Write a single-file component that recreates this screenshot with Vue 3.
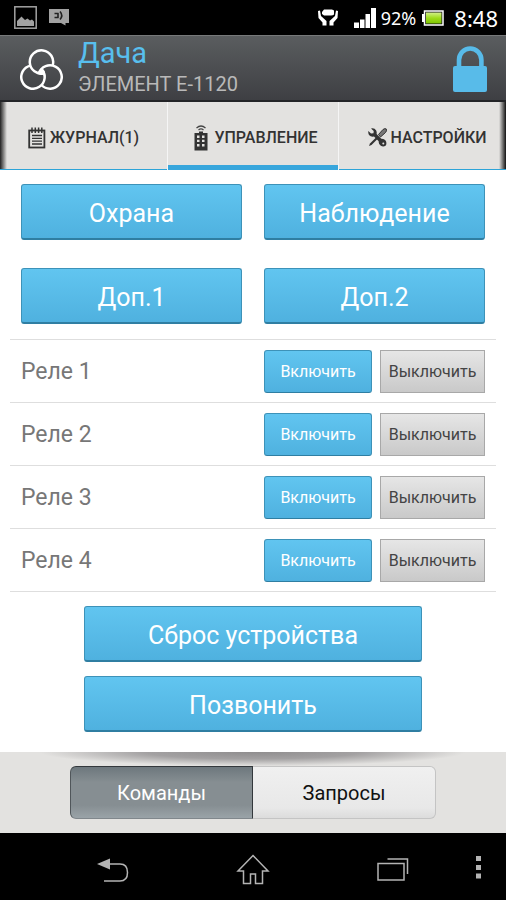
<script setup>
import { ref } from 'vue'

const tabs = [
  { id: 'log', label: 'ЖУРНАЛ(1)' },
  { id: 'control', label: 'УПРАВЛЕНИЕ' },
  { id: 'settings', label: 'НАСТРОЙКИ' },
]
const modes = ['Охрана', 'Наблюдение', 'Доп.1', 'Доп.2']
const relays = ['Реле 1', 'Реле 2', 'Реле 3', 'Реле 4']
const actions = ['Сброс устройства', 'Позвонить']
const activeTab = ref('control')
const section = ref('commands')
</script>

<template>
  <div class="screen">
    <div class="status">
      <svg class="s-pic" viewBox="0 0 23 23" width="23" height="23">
        <rect x="0.8" y="0.8" width="21.4" height="21.4" fill="none" stroke="#a2a2a2" stroke-width="1.5" />
        <path d="M3 20V15L7.500 10.500L11 14L13.500 12.500L16 14.500L18 13.500L20 15.500V20Z" fill="#a2a2a2" />
      </svg>
      <svg class="s-chat" viewBox="0 0 20 17" width="20" height="17">
        <path d="M0 0H20V14H16.500V16.500L12 14H0Z" fill="#a2a2a2" />
        <path d="M5.500 4.500H9.500M5.500 8.500H9.500M9 4V9M11 2.500Q14.500 6.500 11 10.500" fill="none" stroke="#222" stroke-width="1.600" />
      </svg>
      <span class="spacer"></span>
      <svg class="s-hands" viewBox="0 0 20 17" width="20" height="17">
        <path d="M4 3L6 0.500H14L16 1.500V5.500Q15 6.500 13 6.500H6L4 5Z" fill="#fff" />
        <path d="M0 2L2 1.500L3 7L8.500 12V16.500H4.500V13.500L0.500 9Z M20 2L18 1.500L17 7L11.500 12V16.500H15.500V13.500L19.500 9Z" fill="#fff" />
      </svg>
      <svg class="s-signal" viewBox="0 0 22 20" width="22" height="20">
        <path d="M0 14.500H5V20H0ZM6 11.500H10.500V20H6ZM11.500 6H16V20H11.500ZM17 0H22V20H17Z" fill="#fff" />
      </svg>
      <span class="percent">92%</span>
      <svg class="s-battery" viewBox="0 0 22 16" width="22" height="16">
        <defs>
          <linearGradient id="charge" x1="0" y1="0" x2="0" y2="1">
            <stop offset="0" stop-color="#d3f08a" />
            <stop offset="0.500" stop-color="#9fdc1c" />
            <stop offset="1" stop-color="#7cc400" />
          </linearGradient>
        </defs>
        <rect x="0" y="4" width="2" height="8" fill="#fff" />
        <rect x="2.500" y="1" width="18.500" height="14" fill="#111" stroke="#fff" stroke-width="1.500" />
        <rect x="4" y="2.500" width="15.500" height="11" fill="url(#charge)" />
      </svg>
      <span class="clock">8:48</span>
    </div>

    <header class="header">
      <svg class="logo" viewBox="0 0 43 41" width="43" height="41">
        <path d="M21.500 20Q24 22 24.100 24.400Q21.500 25.600 18.900 24.400Q19.200 22 21.500 20Z" fill="#fff" stroke="#fff" stroke-width="2" />
        <g fill="none" stroke="#fff" stroke-width="2.500">
          <path d="M32.600 16.600A11.700 11.700 0 1 0 24.100 24.400" />
          <path d="M21.500 20A11.700 11.700 0 1 1 10.400 16.600" />
          <path d="M21.500 36A11.700 11.700 0 1 0 18.900 24.400" />
        </g>
      </svg>
      <div class="titles">
        <h1>Дача</h1>
        <p>ЭЛЕМЕНТ Е-1120</p>
      </div>
      <svg class="lock" viewBox="0 0 34 46" width="34" height="46">
        <path d="M6 22V14A11.200 11.500 0 0 1 28.400 14V22" fill="none" stroke="#58bbe9" stroke-width="4.600" />
        <rect x="0" y="20" width="34" height="26" rx="2" fill="#58bbe9" />
      </svg>
    </header>

    <nav class="tabs">
      <button
        v-for="tab in tabs"
        :key="tab.id"
        type="button"
        class="tab"
        :class="[tab.id, { active: activeTab === tab.id }]"
        @click="activeTab = tab.id"
      >
        <svg v-if="tab.id === 'log'" viewBox="0 0 18 22" width="18" height="22">
          <rect x="1.200" y="3.500" width="15.200" height="17" fill="none" stroke="#333" stroke-width="1.800" />
          <path d="M4 0.500V6M7.300 0.500V6M10.600 0.500V6M13.800 0.500V6" stroke="#333" stroke-width="1.500" />
          <path d="M4 8.500H14M4 11.300H14M4 14.100H14M4 17H14" stroke="#333" stroke-width="1.300" />
        </svg>
        <svg v-else-if="tab.id === 'control'" viewBox="0 0 14 26" width="14" height="26">
          <path d="M2.500 3Q7 -1 11.500 3M4.500 5Q7 2.800 9.500 5" fill="none" stroke="#444" stroke-width="1.200" />
          <path d="M0.500 8H5V6.500H9V8H13.500V25.500H0.500Z" fill="#333" />
          <path d="M3 10.500H5.500V13H3ZM8 10.500H10.500V13H8ZM3 14.700H5.500V17H3ZM8 14.700H10.500V17H8ZM3 19H5.500V21.500H3ZM8 19H10.500V21.500H8Z" fill="#e3e2e0" />
        </svg>
        <svg v-else viewBox="0 0 19 19" width="19" height="19">
          <path d="M1 18L2 15.500L9 8.500L10.500 10L3.500 17Z" fill="#333" />
          <path d="M10.500 6.500L15 1.500Q17 0 18.300 1Q19 3 17.500 4.500L12.500 9Z" fill="#777" stroke="#333" stroke-width="1" />
          <path d="M3 0.500Q6.500 -0.300 8.200 2.500Q9 4.300 8.600 6L13.300 10.700Q16 10.400 17.800 12.800Q19 15.500 17.800 17.500Q15.500 19.200 12.800 17.800Q10.400 16 10.700 13.300L6 8.600Q3 9.300 1 7Q0 5 0.300 3L3 5.600L5.500 5.200L5.700 3Z" fill="#333" />
          <circle cx="15.300" cy="15.500" r="1" fill="#e3e2e0" />
        </svg>
        <span>{{ tab.label }}</span>
      </button>
    </nav>

    <main class="content">
      <div class="modes">
        <button v-for="mode in modes" :key="mode" type="button" class="blue big">{{ mode }}</button>
      </div>
      <ul class="relays">
        <li v-for="relay in relays" :key="relay">
          <span class="relay-name">{{ relay }}</span>
          <button type="button" class="blue small" :aria-label="`Включить ${relay}`">Включить</button>
          <button type="button" class="grey small" :aria-label="`Выключить ${relay}`">Выключить</button>
        </li>
      </ul>
      <div class="actions">
        <button v-for="action in actions" :key="action" type="button" class="blue big">{{ action }}</button>
      </div>
    </main>

    <footer class="footer">
      <div class="segments">
        <button type="button" :class="{ on: section === 'commands' }" @click="section = 'commands'">Команды</button>
        <button type="button" :class="{ on: section === 'requests' }" @click="section = 'requests'">Запросы</button>
      </div>
    </footer>

    <nav class="system">
      <button type="button" aria-label="Назад">
        <svg viewBox="0 0 32 24" width="32" height="24">
          <path d="M12 6H23Q30.500 6 30.500 14.500Q30.500 23 23 23H7" fill="none" stroke="#b4b4b4" stroke-width="1.500" />
          <path d="M0 6L13 0.500V11.500Z" fill="#b4b4b4" />
        </svg>
      </button>
      <button type="button" aria-label="Домой">
        <svg viewBox="0 0 34 31" width="34" height="31">
          <path d="M17 1.500L32 17H26.500V29.500H19.500V20H14.500V29.500H7.500V17H2Z" fill="none" stroke="#b4b4b4" stroke-width="1.500" />
        </svg>
      </button>
      <button type="button" aria-label="Недавние">
        <svg viewBox="0 0 32 23" width="32" height="23">
          <path d="M10.500 1H30.500V16" fill="none" stroke="#b4b4b4" stroke-width="1.500" />
          <rect x="1" y="5.500" width="26" height="16.500" fill="none" stroke="#b4b4b4" stroke-width="1.500" />
        </svg>
      </button>
      <button type="button" class="more" aria-label="Меню">
        <svg viewBox="0 0 5 23" width="5" height="23">
          <path d="M0 0H5V5H0ZM0 9H5V14H0ZM0 17.500H5V22.500H0Z" fill="#b4b4b4" />
        </svg>
      </button>
    </nav>
  </div>
</template>

<style>
body {
  margin: 0;
  background: #000;
}
</style>

<style scoped>
.screen {
  display: flex;
  flex-direction: column;
  min-height: 100vh;
  background: #fff;
  font-family: Roboto, "Noto Sans", sans-serif;
}
button {
  margin: 0;
  padding: 0;
  border: 0;
  background: none;
  font-family: inherit;
  cursor: pointer;
}
svg {
  display: block;
  flex: none;
}
.status {
  display: flex;
  align-items: center;
  height: 35px;
  padding: 0 8px 0 14px;
  background: #000;
  color: #fff;
  font-family: "Noto Sans", sans-serif;
}
.s-chat {
  margin-left: 12px;
}
.spacer {
  flex: 1;
}
.s-signal {
  margin-left: 16px;
}
.percent {
  margin-left: 5px;
  font-size: 18px;
}
.s-battery {
  margin-left: 6px;
}
.clock {
  margin-left: 10px;
  font-size: 22px;
}
.header {
  display: flex;
  align-items: center;
  box-sizing: border-box;
  height: 67px;
  padding: 2px 19px 0 20px;
  border-top: 1px solid #77797a;
  border-bottom: 2px solid #232427;
  background: linear-gradient(#5a5d5f, #3e3f43);
}
.titles {
  flex: 1;
  margin-left: 15px;
}
h1,
p {
  margin: 0;
  font-weight: 400;
}
h1 {
  color: #58bfee;
  font-size: 29px;
  line-height: 34px;
}
p {
  padding-bottom: 4px;
  color: #b9b9b9;
  font-size: 20px;
  line-height: 28px;
}
.tabs {
  display: grid;
  grid-template-columns: 33fr 34fr 33fr;
  height: 68px;
  background:
    linear-gradient(90deg, #222, transparent) left / 7px 100% no-repeat,
    linear-gradient(270deg, #111, transparent) right / 7px 100% no-repeat,
    #e3e2e0;
}
.tab {
  display: flex;
  align-items: center;
  justify-content: center;
  gap: 4px;
  padding-top: 3px;
  box-shadow: inset 0 -1px #2da4d8;
  color: #333;
  font-size: 16px;
  font-weight: 500;
}
.tab.active {
  border-right: 1px solid #f5f5f5;
  border-left: 1px solid #f5f5f5;
  box-shadow: inset 0 -5px #38a6dc;
}
.tab.control {
  gap: 6px;
  padding-left: 6px;
}
.tab.settings {
  padding-left: 10px;
  gap: 3px;
}
.content {
  flex: 1;
  padding: 14px 10px 20px;
}
.modes {
  display: grid;
  grid-template-columns: 1fr 1fr;
  gap: 28px 22px;
  padding: 0 11px;
}
.blue {
  box-sizing: border-box;
  border: 1px solid #3d92b8;
  border-bottom: 2px solid #2f7ea2;
  border-radius: 3px;
  background: linear-gradient(#61c5f0, #4fb1df);
  color: #fff;
}
.big {
  height: 56px;
  padding-top: 3px;
  font-size: 25px;
}
.relays {
  margin: 15px 0 0;
  padding: 0;
  border-bottom: 1px solid #dedede;
  list-style: none;
}
.relays li {
  display: flex;
  align-items: center;
  gap: 8px;
  height: 62px;
  padding: 0 11px;
  border-top: 1px solid #dedede;
}
.relay-name {
  flex: 1;
  color: #777;
  font-size: 23px;
}
.small {
  height: 43px;
  padding-top: 1px;
  font-size: 16px;
}
.blue.small {
  width: 108px;
  border-bottom-width: 1px;
}
.grey.small {
  box-sizing: border-box;
  width: 105px;
  border: 1px solid #a8a8a8;
  background: linear-gradient(#e6e6e6, #c9c9c9);
  color: #444;
}
.actions {
  display: grid;
  gap: 14px;
  padding: 14px 74px 0;
}
.footer {
  padding: 14px 70px;
  background:
    radial-gradient(ellipse 50% 100% at 50% 0, #8f8d8e, #a3a1a2 50%, transparent) center top / 84% 14px no-repeat,
    #e3e2e0;
}
.segments {
  display: grid;
  grid-template-columns: 1fr 1fr;
}
.segments button {
  box-sizing: border-box;
  height: 53px;
  padding-top: 1px;
  border: 1px solid #c4c4c4;
  background: linear-gradient(#f0f0f0, #e8e8e8 80%, #dcdcdc);
  color: #111;
  font-size: 20px;
}
.segments button:first-child {
  border-radius: 6px 0 0 6px;
}
.segments button:last-child {
  border-left: 0;
  border-radius: 0 6px 6px 0;
}
.segments .on {
  border-color: #33383c #33383c #80878c #50565a;
  background: linear-gradient(#6d777d, #868e92 30%, #868e92 75%, #9aa3a8);
  color: #fff;
}
.system {
  display: grid;
  grid-template-columns: 1fr 1fr 1fr;
  align-items: center;
  position: relative;
  height: 67px;
  padding: 6px 43px 0;
  box-sizing: border-box;
  background: #000;
}
.system button {
  display: flex;
  justify-content: center;
}
.system .more {
  position: absolute;
  top: 23px;
  right: 25px;
}
</style>
